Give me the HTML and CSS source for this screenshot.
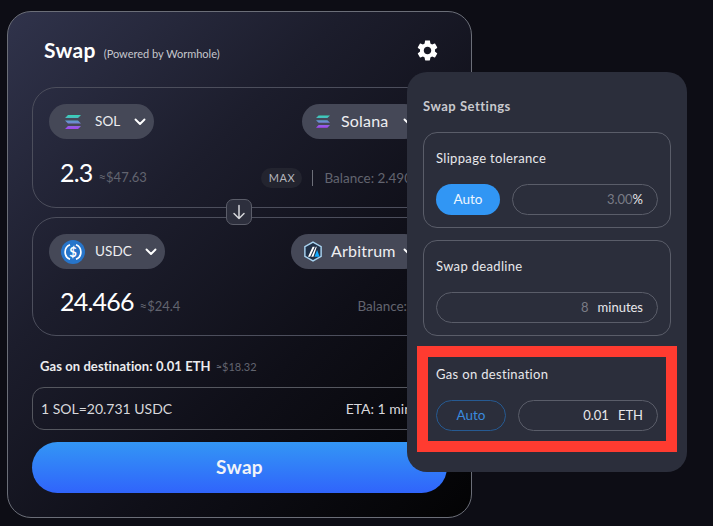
FILE: index.html
```html
<!DOCTYPE html>
<html lang="en">
<head>
<meta charset="utf-8">
<title>Swap</title>
<link rel="stylesheet" href="styles.css">
</head>
<body>
<svg class="defs" width="0" height="0" aria-hidden="true">
  <defs>
    <linearGradient id="solg" x1="0" y1="0" x2="0" y2="1">
      <stop offset="0" stop-color="#35d6b5"/>
      <stop offset="0.5" stop-color="#6a8fd0"/>
      <stop offset="1" stop-color="#a645f0"/>
    </linearGradient>
    <symbol id="sol" viewBox="0 0 16 14">
      <path fill="url(#solg)" d="M3 0h13l-3 3H0zM0 5.500h13l3 3H3zM3 11h13l-3 3H0z"/>
    </symbol>
    <symbol id="chev" viewBox="0 0 12 8">
      <path d="M1.500 1.500 6 6l4.500-4.500" fill="none" stroke="#fff" stroke-width="1.900" stroke-linecap="round" stroke-linejoin="round"/>
    </symbol>
  </defs>
</svg>
<div class="page">
  <main class="card">
    <header class="head">
      <div class="title"><h1>Swap</h1><span class="powered">(Powered by Wormhole)</span></div>
      <svg class="gear" viewBox="0 0 24 24"><path fill="#fff" d="M19.140 12.940c.04-.3.06-.61.06-.94 0-.32-.02-.64-.07-.94l2.030-1.580c.18-.14.23-.41.12-.61l-1.920-3.320c-.12-.22-.37-.29-.59-.22l-2.390.96c-.5-.38-1.030-.7-1.620-.94l-.36-2.540c-.04-.24-.24-.41-.48-.41h-3.840c-.24 0-.43.17-.47.41l-.36 2.540c-.59.24-1.130.57-1.620.94l-2.390-.96c-.22-.08-.47 0-.59.22L2.740 8.870c-.12.21-.08.47.12.61l2.030 1.580c-.05.3-.09.63-.09.94s.02.64.07.94l-2.030 1.580c-.18.14-.23.41-.12.61l1.920 3.320c.12.22.37.29.59.22l2.390-.96c.5.38 1.030.7 1.620.94l.36 2.540c.05.24.24.41.48.41h3.840c.24 0 .44-.17.47-.41l.36-2.540c.59-.24 1.130-.56 1.620-.94l2.390.96c.22.08.47 0 .59-.22l1.920-3.320c.12-.22.07-.47-.12-.61l-2.010-1.580zM12 15.600c-1.980 0-3.600-1.620-3.600-3.600s1.620-3.600 3.600-3.600 3.600 1.620 3.600 3.600-1.620 3.600-3.600 3.600z"/></svg>
    </header>

    <section class="box box-from">
      <div class="row-top">
        <button class="pill pill-sol"><svg class="ico-sol"><use href="#sol"/></svg><span class="sym">SOL</span><svg class="chev"><use href="#chev"/></svg></button>
        <button class="pill net net-sol"><svg class="ico-sol-sm"><use href="#sol"/></svg><span class="netname">Solana</span><svg class="chev"><use href="#chev"/></svg></button>
      </div>
      <div class="row-amt">
        <span class="amount">2.3</span><span class="usd">≈$47.63</span>
        <span class="right"><span class="max">MAX</span><span class="sep"></span><span class="bal">Balance: 2.490</span></span>
      </div>
    </section>

    <button class="flip"><svg viewBox="0 0 14 16" width="14" height="16"><path d="M7 1.500v13M2 9.500l5 5 5-5" fill="none" stroke="#d5d6da" stroke-width="1.500" stroke-linecap="round" stroke-linejoin="round"/></svg></button>

    <section class="box box-to">
      <div class="row-top">
        <button class="pill pill-usdc">
          <svg class="ico-usdc" viewBox="0 0 24 24"><circle cx="12" cy="12" r="12" fill="#2775ca"/><path d="M9 4.700a7.900 7.900 0 0 0 0 14.600M15 4.700a7.900 7.900 0 0 1 0 14.600" fill="none" stroke="#fff" stroke-width="1.700"/><text class="usdc-s" x="12" y="16.500" text-anchor="middle">$</text></svg>
          <span class="sym">USDC</span><svg class="chev"><use href="#chev"/></svg></button>
        <button class="pill net net-arb">
          <svg class="ico-arb" viewBox="0 0 20 22"><path d="M10 1.200 18.500 6v10L10 20.800 1.500 16V6z" fill="#213147" stroke="#a9d3f0" stroke-width="1.500"/><path d="M4.800 16.500 9.600 6h2.200L7 16.500zM8.200 16.500 13 6h1L10.400 16.500z" fill="#fff"/><path d="M11.500 16.500l2.800-7 2.700 7z" fill="#12aaff"/></svg>
          <span class="netname">Arbitrum</span><svg class="chev"><use href="#chev"/></svg></button>
      </div>
      <div class="row-amt">
        <span class="amount">24.466</span><span class="usd">≈$24.4</span>
        <span class="right"><span class="bal bal-to">Balance:</span></span>
      </div>
    </section>

    <p class="gas"><strong>Gas on destination: 0.01 ETH</strong><span class="gas-usd">≈$18.32</span></p>

    <div class="rate"><span>1 SOL=20.731 USDC</span><span class="eta">ETA: 1 min</span></div>

    <button class="swap">Swap</button>
  </main>

  <aside class="settings">
    <h2>Swap Settings</h2>
    <div class="setting">
      <div class="label">Slippage tolerance</div>
      <div class="controls">
        <button class="auto auto-on">Auto</button>
        <div class="field"><span class="val">3.00</span><span class="unit">%</span></div>
      </div>
    </div>
    <div class="setting">
      <div class="label">Swap deadline</div>
      <div class="controls">
        <div class="field"><span class="val">8</span><span class="unit unit-gap">minutes</span></div>
      </div>
    </div>
    <div class="setting marked">
      <div class="label">Gas on destination</div>
      <div class="controls">
        <button class="auto auto-off">Auto</button>
        <div class="field"><span class="val val-on">0.01</span><span class="unit unit-gap">ETH</span></div>
      </div>
    </div>
  </aside>
</div>
</body>
</html>
```
FILE: styles.css
```css
* { box-sizing: border-box; }
html, body { margin: 0; height: 100%; }
body {
  background: #0d0d15;
  font-family: "Lato", "Liberation Sans", sans-serif;
  color: #fff;
  overflow: hidden;
}
button { font-family: inherit; border: 0; color: inherit; padding: 0; }
.defs { position: absolute; }
.page { position: relative; padding: 11px 0 0 7px; }

.card {
  position: relative;
  width: 465px;
  height: 507px;
  padding: 0 24px;
  border: 1px solid #6b6e78;
  border-radius: 24px;
  background: linear-gradient(135deg, #30334b 0%, #1c1d2c 35%, #0f0f18 65%, #030304 100%);
}
.head {
  display: flex;
  align-items: center;
  justify-content: space-between;
  height: 75px;
  padding: 2px 7px 0 12px;
}
.title { display: flex; align-items: baseline; gap: 8px; margin-top: -2px; }
h1 { margin: 0; font-size: 21px; font-weight: 700; letter-spacing: .3px; line-height: 24px; }
.powered { font-size: 11px; color: #c6c7cd; }
.gear { width: 25px; height: 25px; }

.box {
  border: 1px solid #4c4e5c;
  border-radius: 24px;
  padding: 16px 16px 0;
}
.box-from { height: 121px; margin-bottom: 9px; }
.box-from .row-amt { margin-top: 18px; }
.box-to { height: 119px; }
.row-top { display: flex; justify-content: space-between; align-items: center; }
.pill {
  display: flex;
  align-items: center;
  height: 35px;
  border-radius: 18px;
  background: #454857;
  color: #eeeef1;
  font-size: 13.500px;
  text-align: left;
}
.pill-sol { width: 105px; padding: 0 8px 0 16px; }
.pill-usdc { width: 116px; padding: 0 8px 0 12px; }
.net { font-size: 16px; padding-left: 14px; padding-right: 0; }
.net-sol { width: 120px; margin-right: 8px; }
.net-arb { width: 131px; margin-right: 8px; padding-left: 12px; }
.sym { flex: 1; letter-spacing: .1px; padding-bottom: 2px; }
.pill-sol .sym { padding-left: 14px; }
.pill-usdc .sym { padding-left: 10px; }
.netname { flex: 1; padding-left: 11px; padding-bottom: 2px; letter-spacing: .2px; }
.net-arb .netname { padding-left: 8px; padding-bottom: 3px; }
.chev { width: 12px; height: 8px; flex: none; }
.net .chev { margin-right: 7px; }
.ico-sol { width: 16px; height: 14px; }
.ico-sol-sm { width: 14px; height: 13px; }
.ico-usdc { width: 24px; height: 24px; }
.ico-arb { width: 20px; height: 21px; }
.usdc-s { font-size: 13px; font-weight: 700; fill: #fff; font-family: "Lato", sans-serif; }

.row-amt { display: flex; align-items: baseline; margin-top: 17px; padding-left: 11px; }
.amount { font-size: 25px; font-weight: 400; letter-spacing: -.8px; }
.usd { font-size: 13px; color: #62646f; margin-left: 6px; }
.right { margin-left: auto; display: flex; align-items: center; }
.max {
  height: 20px;
  width: 41px;
  line-height: 20px;
  text-align: center;
  border-radius: 10px;
  background: #23242f;
  color: #b6b7be;
  font-size: 11px;
  letter-spacing: .6px;
}
.sep { width: 1px; height: 16px; background: #6d6f79; margin: 0 11px 0 10px; }
.bal { font-size: 13.500px; color: #62646f; margin-right: 18px; }
.bal-to { margin-right: 23px; }

.flip {
  position: absolute;
  left: 218px;
  top: 187px;
  width: 26px;
  height: 26px;
  border: 1px solid #5b5d69;
  border-radius: 7px;
  background: #2d2f3d;
  display: flex;
  align-items: center;
  justify-content: center;
}

.gas { margin: 21px 0 0 8px; height: 18px; line-height: 18px; font-size: 13px; }
.gas strong { font-weight: 700; color: #ececef; letter-spacing: .08px; }
.gas-usd { font-size: 11px; color: #62646f; margin-left: 5px; }

.rate {
  display: flex;
  justify-content: space-between;
  align-items: center;
  height: 43px;
  margin-top: 12px;
  padding: 0 8px;
  border: 1px solid #55575f;
  border-radius: 12px;
  font-size: 14px;
  color: #d8d8dc;
}
.eta { margin-right: 26px; }

.swap {
  display: block;
  width: 100%;
  height: 51px;
  margin-top: 12px;
  padding-bottom: 2px;
  border-radius: 26px;
  background: linear-gradient(180deg, #3396f5, #3064fb);
  color: #f2f3f7;
  font-size: 19px;
  font-weight: 700;
  letter-spacing: .3px;
}

.settings {
  position: absolute;
  left: 407px;
  top: 72px;
  width: 280px;
  height: 400px;
  padding: 26px 16px 0;
  border-radius: 20px;
  background: #2b2e3b;
  display: flex;
  flex-direction: column;
}
h2 {
  margin: 0 0 17px;
  height: 17px;
  line-height: 17px;
  font-size: 13px;
  font-weight: 700;
  color: #c8c9ce;
  letter-spacing: .5px;
}
.setting {
  height: 96px;
  margin-bottom: 12px;
  padding: 0 12px;
  border: 1px solid #5a5d69;
  border-radius: 14px;
}
.label {
  margin-top: 16px;
  height: 18px;
  line-height: 18px;
  font-size: 13px;
  color: #e8e8eb;
  letter-spacing: .33px;
}
.controls { display: flex; gap: 12px; margin-top: 17px; }
.auto {
  flex: none;
  height: 31px;
  padding-bottom: 1px;
  border-radius: 16px;
  font-size: 13.500px;
}
.auto-on { width: 64px; background: #3196f4; color: #eef6ff; }
.auto-off { width: 70px; background: transparent; border: 1px solid #265a92; color: #3a8ade; }
.field {
  flex: 1;
  height: 31px;
  display: flex;
  align-items: center;
  justify-content: flex-end;
  padding: 0 14px 1px;
  border: 1px solid #5a5d69;
  border-radius: 16px;
  font-size: 13px;
}
.val { color: #7a7c86; }
.val-on { color: #e8e8eb; }
.unit { color: #e8e8eb; }
.unit-gap { margin-left: 9px; }
.marked {
  height: 106px;
  margin: -2px -6px 0;
  padding: 0 8px;
  border: 11px solid #ff3b30;
  border-radius: 0;
}
.marked .label { margin-top: 8px; }
```
